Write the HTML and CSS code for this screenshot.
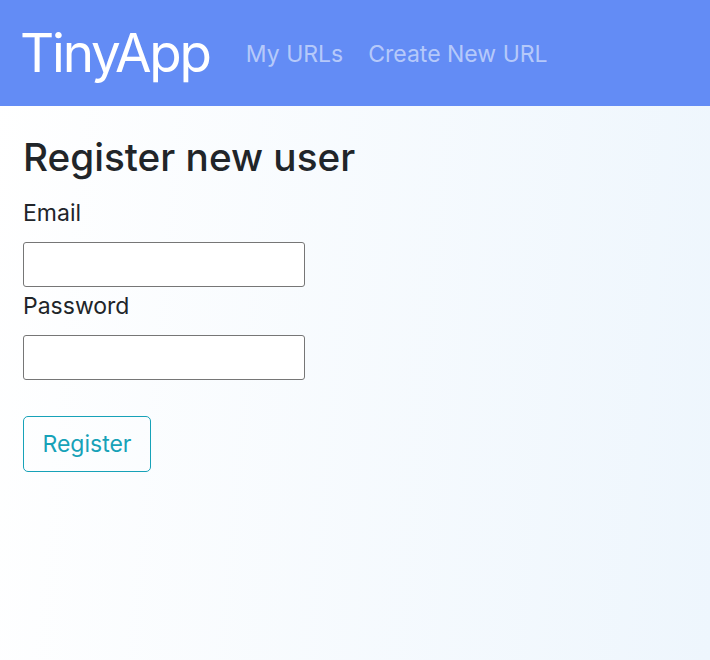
FILE: index.html
```html
<!DOCTYPE html>
<html lang="en">
<head>
<meta charset="utf-8">
<title>TinyApp</title>
<link rel="stylesheet" href="styles.css">
</head>
<body>
<nav class="navbar">
  <a class="brand" href="#">TinyApp</a>
  <div class="links">
    <a class="nav-link" href="#">My URLs</a>
    <a class="nav-link" href="#">Create New URL</a>
  </div>
</nav>
<main class="content">
  <h1 class="title">Register new user</h1>
  <form class="form">
    <div class="field">
      <label class="label" for="email">Email</label>
      <input class="input" id="email" type="email">
    </div>
    <div class="field">
      <label class="label" for="password">Password</label>
      <input class="input" id="password" type="password">
    </div>
    <button class="btn" type="button">Register</button>
  </form>
</main>
</body>
</html>
```
FILE: styles.css
```css
* { box-sizing: border-box; }
html, body { height: 100%; }
body {
  margin: 0;
  font-family: Inter, "Liberation Sans", sans-serif;
  color: #212529;
  background: linear-gradient(95deg, #ffffff 0%, #eef6fd 100%);
  min-height: 100vh;
}
.navbar {
  height: 106px;
  background: #638cf5;
  display: flex;
  align-items: center;
  padding: 0 20px;
}
.brand {
  font-size: 53px;
  color: #fff;
  text-decoration: none;
  margin-right: 36px;
  letter-spacing: -2.2px;
}
.links {
  display: flex;
  gap: 25px;
  padding-top: 2px;
}
.nav-link {
  font-size: 23px;
  color: rgba(255, 255, 255, 0.55);
  text-decoration: none;
}
.content {
  padding: 28px 23px 0;
}
.title {
  margin: 0 0 15px;
  font-size: 38.7px;
  font-weight: 500;
  line-height: 47px;
}
.form {
  display: flex;
  flex-direction: column;
  align-items: flex-start;
}
.field {
  display: flex;
  flex-direction: column;
  align-items: flex-start;
}
.label {
  font-size: 23px;
  line-height: 34px;
  margin-bottom: 12px;
}
.input {
  width: 282px;
  height: 45px;
  border: 1px solid #767676;
  border-radius: 3px;
  background: #fff;
  margin: 0 0 2px;
}
.btn {
  margin-top: 34px;
  width: 128px;
  height: 56px;
  font-family: inherit;
  font-size: 23px;
  color: #17a2b8;
  background: transparent;
  border: 1px solid #17a2b8;
  border-radius: 5px;
  padding: 0;
}
```
